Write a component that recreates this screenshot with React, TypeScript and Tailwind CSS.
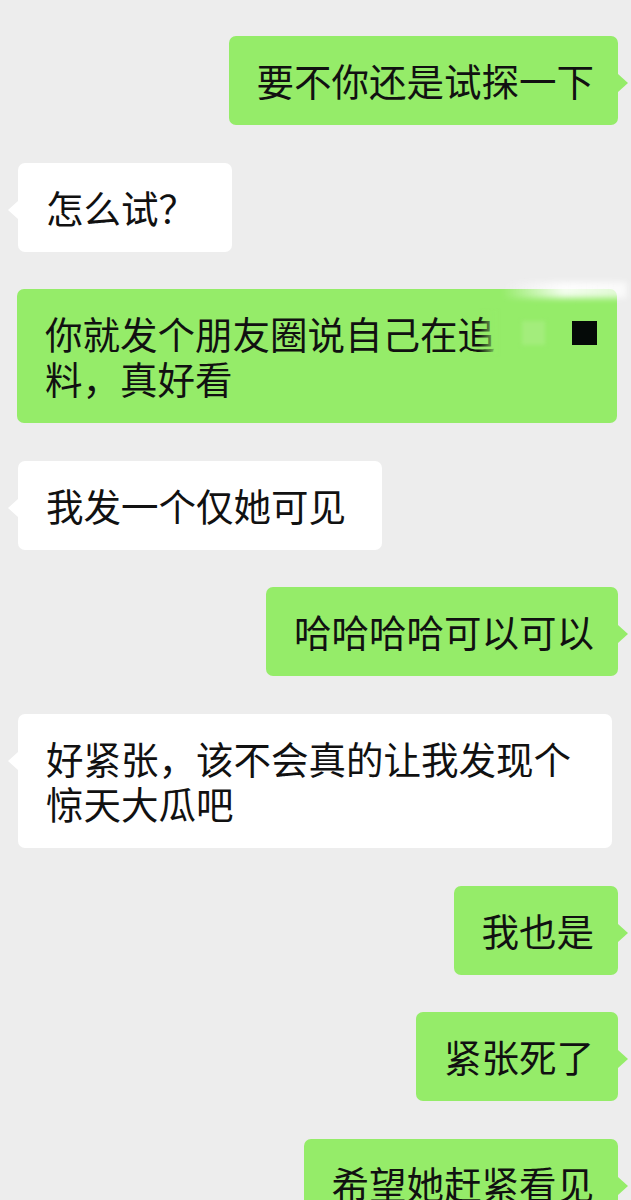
import type { ReactNode } from "react";

function Bubble({ mine, children, tail = true, className = "" }: { mine?: boolean; children: ReactNode; tail?: boolean; className?: string }) {
  return (
    <div className={`flex ${mine ? "justify-end pr-[13px]" : "justify-start pl-[18px]"}`}>
      <div
        className={`relative max-w-[594px] rounded-[7px] pt-[21px] pb-[23px] text-[37.5px] leading-[45px] text-[#111] ${
          mine ? "bg-[#95ec69] pl-[28px] pr-[24px]" : "bg-white pl-[28px] pr-[36px]"
        } ${className}`}
      >
        {children}
        {tail &&
          (mine ? (
            <span className="absolute top-[38px] right-[-10px] h-0 w-0 border-y-[9px] border-l-[10px] border-y-transparent border-l-[#95ec69]" />
          ) : (
            <span className="absolute top-[38px] left-[-10px] h-0 w-0 border-y-[9px] border-r-[10px] border-y-transparent border-r-white" />
          ))}
      </div>
    </div>
  );
}

export default function App() {
  return (
    <div className="h-[1200px] w-full overflow-hidden bg-[#ededed] font-['Noto_Sans_CJK_SC','Noto_Sans',sans-serif]">
      <div className="flex flex-col gap-[37.6px] pt-[36px]">
        <Bubble mine>要不你还是试探一下</Bubble>

        <Bubble>怎么试？</Bubble>

        {/* blurred-out part of the screenshot */}
        <div className="flex justify-start pl-[17px]">
          <div className="relative w-[600px] whitespace-nowrap rounded-[7px] bg-[#95ec69] pt-[21px] pb-[23px] pl-[28px] text-[37.5px] leading-[45px] text-[#111]">
            <div className="flex h-[45px] items-center">
              <span>你就发个朋友圈说自己在</span>
              <span className="relative">
                追
                <span className="absolute top-0 right-[-4px] h-[45px] w-[20px] bg-linear-to-r from-[#95ec69]/0 to-[#95ec69] blur-[1px]" />
              </span>
              <span className="ml-[27px] h-[24px] w-[23px] bg-[#a3ed7c] blur-[2px]" />
              <span className="ml-[27px] h-[24px] w-[25px] bg-[#050a08]" />
            </div>
            <div>料，真好看</div>
            <span className="absolute top-[-7px] right-[-10px] h-[16px] w-[125px] bg-linear-to-r from-white/0 via-white/90 to-white/70 blur-[3px]" />
          </div>
        </div>

        <Bubble>我发一个仅她可见</Bubble>

        <Bubble mine>哈哈哈哈可以可以</Bubble>

        <Bubble>好紧张，该不会真的让我发现个惊天大瓜吧</Bubble>

        <Bubble mine>我也是</Bubble>

        <Bubble mine>紧张死了</Bubble>

        <Bubble mine>希望她赶紧看见</Bubble>
      </div>
    </div>
  );
}
